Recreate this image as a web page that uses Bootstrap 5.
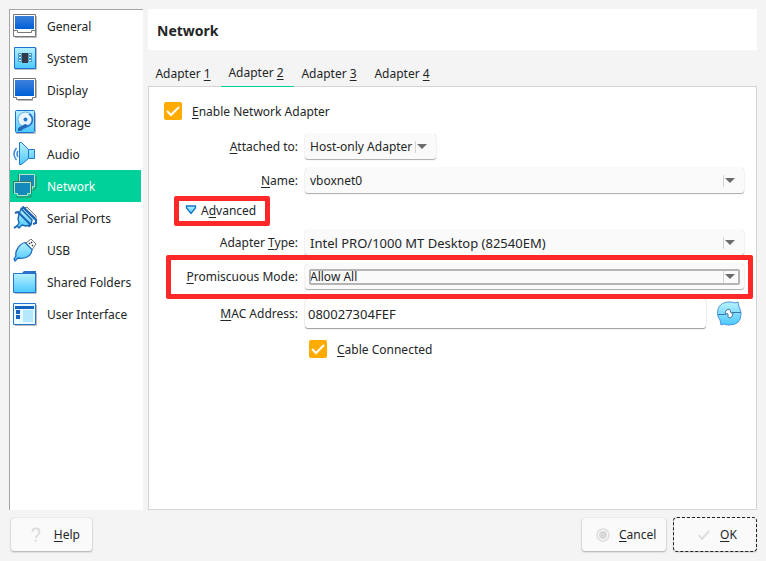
<!DOCTYPE html>
<html lang="en">
<head>
<meta charset="utf-8">
<meta name="viewport" content="width=device-width, initial-scale=1">
<title>Settings - Network</title>
<link href="https://cdn.jsdelivr.net/npm/bootstrap@5.3.0/dist/css/bootstrap.min.css" rel="stylesheet">
<style>
  body { background: #f4f4f4; color: #232627; font: 13px/18px "Noto Sans", sans-serif; padding: 9px 9px 10px; }
  u { text-underline-offset: 2px; }
  .side { width: 134px; background: #fff; border: 1px solid #a5a5a5; border-width: 1px 0 0 1px; padding-right: 2px; }
  .side .list-group-item { height: 32px; padding: 0 0 0 3px; gap: 10px; color: #232627; background: #fff; white-space: nowrap; font-size: 12px; }
  .side .list-group-item.active { background: #00d09a; color: #fff; margin-top: 0; }
  .side svg { width: 24px; height: 24px; flex: none; }
  .side span { padding-top: 2px; }
  .main-col { margin-left: 5px; }
  .title-bar { height: 41px; font-size: 14px; line-height: 41px; padding: 1px 9px 0; }
  .tabs { height: 37px; padding-top: 10px; margin-bottom: -1px; z-index: 1; }
  .tabs .nav-link { width: 73px; padding: 6px 3px 0 0; color: #232627; text-align: center; border-radius: 0; font-size: 12px; line-height: 16px; white-space: nowrap; transition: none; }
  .tabs .nav-link.active { padding-top: 5px; border-bottom: 1px solid #00d09a; }
  .panel { background: #fff; border: 1px solid #d4d4d4; padding: 15px 12px 15px 15px; font-size: 12px; }
  .field { display: grid; grid-template-columns: 134px minmax(0, 1fr); column-gap: 7px; align-items: center; }
  .field > label { text-align: right; }
  .field-gap { margin-top: 9px; }
  .field-first { margin-top: 14px; }
  .tick { appearance: none; width: 18px; height: 18px; margin: 0; flex: none; border-radius: 2px; background: #ffab00 url("data:image/svg+xml,%3Csvg xmlns='http://www.w3.org/2000/svg' viewBox='0 0 18 18'%3E%3Cpath d='M3 9l4 4 8-8' fill='none' stroke='white' stroke-width='2'/%3E%3C/svg%3E"); }
  .tick-row { height: 18px; }
  .tick-row label { padding: 2px 0 0 10px; }
  .combo { position: relative; height: 25px; border-radius: 3px; background: #fafafa; box-shadow: 0 1px 1px #aaa, 0 0 1px #ccc; }
  .combo select { appearance: none; width: 100%; height: 25px; border: 0; padding: 0 22px 0 5px; background: transparent; color: inherit; font: inherit; outline: 0; }
  .combo::before { content: ""; position: absolute; right: 20px; top: 7px; height: 12px; border-left: 1px solid #d5d5d5; }
  .combo::after { content: ""; position: absolute; right: 9px; top: 10px; border: 5px solid transparent; border-top-color: #6b6b6b; border-bottom: 0; pointer-events: none; }
  .combo-short { width: 131px; }
  .combo-short select { padding-right: 10px; }
  .combo .long-value { font-size: 13px; }
  .combo-focus select { height: 16px; margin: 5px 5px 4px 4px; width: calc(100% - 8px); padding: 0; border: 2px solid #b5b5b5; border-radius: 2px; line-height: 12px; display: block; position: absolute; text-indent: -1px; }
  .marked { position: relative; }
  .marked::after { content: ""; position: absolute; inset: -9px -9px -10px 2px; border: 5px solid #ff2828; border-radius: 2px; pointer-events: none; }
  .advanced { height: 30px; width: 96px; margin: 3px 0 4px 10px; border: 5px solid #ff2828; border-radius: 2px; background: #fff; color: inherit; padding: 0 0 0 6px; gap: 4px; }
  .advanced svg { margin-bottom: 2px; }
  .mac-row { margin-top: 10px; }
  .mac-row input { height: 29px; min-width: 0; border: 0; border-radius: 3px; padding: 0 3px; box-shadow: 0 1px 1px #999, 0 0 1px #bbb; color: inherit; outline: 0; font-size: 13px; }
  .mac-row button { width: 26px; height: 26px; margin: 0 2px 2px 10px; }
  .cable { margin: 12px 0 0 145px; }
  .foot { margin-top: 8px; padding: 0 1px 0 2px; }
  .foot .btn { height: 33px; padding: 0 12px 0 17px; border: 0; border-radius: 3px; background: #fafafa; color: #232627; font: 12px/16px "Noto Sans", sans-serif; box-shadow: 0 1px 2px #aaa, 0 0 1px #bbb; gap: 10px; }
  .foot .btn-cancel { width: 84px; padding: 0 8px 0 14px; gap: 9px; }
  .foot .btn-help { width: 81px; }
  .foot .btn-ok { width: 82px; padding: 0 18px 0 23px; outline: 1px dashed #222; gap: 9px; }
</style>
<script src="https://cdn.jsdelivr.net/npm/bootstrap@5.3.0/dist/js/bootstrap.bundle.min.js"></script>
</head>
<body class="d-flex flex-column vh-100 overflow-hidden">
<svg width="0" height="0" class="position-absolute" aria-hidden="true">
  <defs>
    <linearGradient id="screen" x2="0" y2="1"><stop stop-color="#3c80d8"/><stop offset="1" stop-color="#0060d8"/></linearGradient>
    <linearGradient id="sky" x2="0" y2="1"><stop stop-color="#b8f1ff"/><stop offset="1" stop-color="#4bc8ff"/></linearGradient>
  </defs>
</svg>
<div class="d-flex flex-grow-1">
  <nav class="side flex-shrink-0" aria-label="Settings categories">
    <div class="list-group list-group-flush">
      <a href="#" class="list-group-item list-group-item-action d-flex align-items-center border-0">
        <svg viewBox="0 0 24 24"><path d="M2 23.500H23.500V2" fill="none" stroke="#bbb"/><path d="M.5.500H22.500V22.500H.5z" fill="#fff" stroke="#777"/><path d="M2 2H21V15H2z" fill="url(#screen)"/><path d="M1 16.500H4.500V18.500H18.500V16.500H22" fill="none" stroke="#777"/></svg><span>General</span></a>
      <a href="#" class="list-group-item list-group-item-action d-flex align-items-center border-0">
        <svg viewBox="0 0 24 24"><path d="M2 23.500H23.500V2" fill="none" stroke="#bbb"/><path d="M1.500 1.500h21v21h-21z" fill="url(#sky)" stroke="#2070d0"/><path d="M5.500 7.500h3v2h-3zm0 3h3v2h-3zm0 3h3v2h-3zm10-6h3v2h-3zm0 3h3v2h-3zm0 3h3v2h-3z" fill="#fff" stroke="#3d8fc8"/><path d="M9 7h6v10H9z" fill="#333b48"/></svg><span>System</span></a>
      <a href="#" class="list-group-item list-group-item-action d-flex align-items-center border-0">
        <svg viewBox="0 0 24 24"><path d="M23.500 2V20M5 22.500H20" fill="none" stroke="#bbb"/><path d="M.5.500H22.500V19.500H19.500V21.500H3.500V19.500H.5z" fill="#fff" stroke="#777"/><path d="M2 2H21V18H2z" fill="url(#screen)"/></svg><span>Display</span></a>
      <a href="#" class="list-group-item list-group-item-action d-flex align-items-center border-0">
        <svg viewBox="0 0 24 24"><path d="M3 23.500H22.500V3" fill="none" stroke="#bbb"/><rect x="2.500" y=".5" width="19" height="22" rx="1" fill="url(#sky)" stroke="#2070d0"/><circle cx="12.500" cy="9.500" r="7.500" fill="#e6f7ff" stroke="#65a9e3"/><path d="M16 4c5 3 4 10-1 12l-4 2" fill="none" stroke="#2070d0" stroke-width="1.500"/><circle cx="12.500" cy="9.500" r="2" fill="#2875cc"/><path d="M12 14l-7 4v3h3l7-6z" fill="#2468b8"/></svg><span>Storage</span></a>
      <a href="#" class="list-group-item list-group-item-action d-flex align-items-center border-0">
        <svg viewBox="0 0 24 24"><path d="M3.500 6Q-1.500 12 3.500 18M5 9Q3 12 5 15" fill="none" stroke="#3b88df" stroke-width="1.500"/><path d="M6.500.5h2l7 7h6v9h-6l-7 6h-2z" fill="url(#sky)" stroke="#2377d2"/><path d="M15.500 7.500v9" stroke="#2377d2"/></svg><span>Audio</span></a>
      <a href="#" class="list-group-item list-group-item-action d-flex align-items-center border-0 active" aria-current="page">
        <svg viewBox="0 0 24 24"><path d="M20 16h2V14h1V2M3 23h15v-2h1" fill="none" stroke="#36836e"/><path d="M6.500.500h15v12h-2v2h-11v-2h-2z" fill="#148aba" stroke="#b9e6c8"/><path d="M1.500 8.500h16v11h-3v2h-10v-2h-3z" fill="#148aba" stroke="#b9e6c8"/><path d="M.5 7.500h18v12M.5 7.500v12M5.500.500v7" fill="none" stroke="#397665"/></svg><span>Network</span></a>
      <a href="#" class="list-group-item list-group-item-action d-flex align-items-center border-0">
        <svg viewBox="0 0 24 24"><path d="M11 2l3-1 9 9v4z" fill="#eee" stroke="#777"/><path d="M9 1l12 11.500" stroke="#1b64b5" stroke-width="3.500"/><path d="M8 3l11 11-1 5-5 1-4-1-3 3-2-2 2-3-1-4 1-5z" fill="url(#sky)" stroke="#1b64b5" stroke-width="1.300"/><path d="M2 7l3-1 12 12-1 3M21 12l2 2v3l-3 1M1 22l3-2" fill="none" stroke="#1b64b5" stroke-width="2"/><path d="M10 3l10 10" stroke="#9be5ff"/></svg><span>Serial Ports</span></a>
      <a href="#" class="list-group-item list-group-item-action d-flex align-items-center border-0">
        <svg viewBox="0 0 24 24"><path d="M13 5l5-4 5 5-4 6z" fill="#fff" stroke="#777"/><path d="M16 5h1v1h-1zm3 2h1v1h-1zm-1-3h1v1h-1z" fill="#333" stroke="#333" stroke-width=".5"/><path d="M12 4.500l7 7q0 5-5 7.500-4 2-9 1l-3 3-1-2 2-3q-1-4 2-8 2-4 7-5.500z" fill="url(#sky)" stroke="#226ec0" stroke-width="1.300"/></svg><span>USB</span></a>
      <a href="#" class="list-group-item list-group-item-action d-flex align-items-center border-0">
        <svg viewBox="0 0 24 24"><path d="M2 23.500H23.500V3" fill="none" stroke="#bbb"/><path d="M.5 3.500h22v19H.5z" fill="url(#sky)" stroke="#2474d2"/><path d="M9 3l2-2h12v3H9z" fill="#2a70ca"/></svg><span>Shared Folders</span></a>
      <a href="#" class="list-group-item list-group-item-action d-flex align-items-center border-0">
        <svg viewBox="0 0 24 24"><path d="M2 23.500H23.500V3" fill="none" stroke="#bbb"/><path d="M.5 1.500h22v21H.5z" fill="#e9fbff" stroke="#2474d2"/><path d="M2 4h19v3H2zm1 4h4v4H3zm0 5h4v4H3z" fill="#1763bd"/><path d="M10 8h10v12H10z" fill="#b5e8fc"/></svg><span>User Interface</span></a>
    </div>
  </nav>
  <main class="main-col flex-grow-1 d-flex flex-column">
    <h1 class="title-bar bg-white fw-bold m-0">Network</h1>
    <div class="nav tabs position-relative flex-nowrap" role="tablist">
      <a class="nav-link" role="tab" href="#">Adapter <u>1</u></a>
      <a class="nav-link active" role="tab" aria-selected="true" href="#">Adapter <u>2</u></a>
      <a class="nav-link" role="tab" href="#">Adapter <u>3</u></a>
      <a class="nav-link" role="tab" href="#">Adapter <u>4</u></a>
    </div>
    <form class="panel flex-grow-1">
      <div class="tick-row d-flex align-items-center">
        <input class="tick" type="checkbox" id="enable" checked><label for="enable"><u>E</u>nable Network Adapter</label>
      </div>
      <div class="field field-first">
        <label for="attached"><u>A</u>ttached to:</label>
        <div class="combo combo-short"><select id="attached"><option>Host-only Adapter</option></select></div>
      </div>
      <div class="field field-gap">
        <label for="name"><u>N</u>ame:</label>
        <div class="combo"><select id="name"><option>vboxnet0</option></select></div>
      </div>
      <button type="button" class="advanced d-flex align-items-center" aria-expanded="true">
        <svg width="12" height="10" viewBox="0 0 12 10"><path d="M1.500 1h9v2L6 8.500 1.500 3z" fill="url(#sky)" stroke="#1674c8" stroke-width="1.300"/></svg>
        <span>A<u>d</u>vanced</span>
      </button>
      <div class="field">
        <label for="type">Adapter <u>T</u>ype:</label>
        <div class="combo"><select id="type" class="long-value"><option>Intel PRO/1000 MT Desktop (82540EM)</option></select></div>
      </div>
      <div class="field field-gap marked">
        <label for="mode"><u>P</u>romiscuous Mode:</label>
        <div class="combo combo-focus"><select id="mode"><option>Allow All</option></select></div>
      </div>
      <div class="field mac-row">
        <label for="mac"><u>M</u>AC Address:</label>
        <div class="d-flex align-items-center">
          <input class="flex-grow-1" type="text" id="mac" value="080027304FEF">
          <button type="button" class="btn p-0 border-0 d-flex" aria-label="Generate a new MAC address">
            <svg width="26" height="26" viewBox="0 0 26 26"><path d="M1.500 13.500C1.500 6 6 2 13 2q4 0 6 1l3-1 1 5q2 3 2 7 0 11-12 11-3 0-5-1l-3 1-1-5q-2.500-3-2.500-6.500z" fill="url(#sky)" stroke="#4b96dc"/><path d="M2 14.500h8M16 12.500h9" stroke="#3b78b0"/><path d="M9 13q0-3 4-4l1 1 1 3h2q0 4-3 5l-2-1v-3z" fill="#fff" stroke="#4a779b"/></svg>
          </button>
        </div>
      </div>
      <div class="cable tick-row d-flex align-items-center">
        <input class="tick" type="checkbox" id="cable" checked><label for="cable"><u>C</u>able Connected</label>
      </div>
    </form>
  </main>
</div>
<footer class="foot d-flex">
  <button type="button" class="btn btn-help d-flex align-items-center me-auto"><svg width="16" height="16" viewBox="0 0 16 16"><path d="M4.500 5Q4.500 1.500 8 1.500T11.500 5Q11.500 7 9.500 8.500Q8 9.500 8 11M8 12.500v2" fill="none" stroke="#ddd" stroke-width="2"/></svg><span><u>H</u>elp</span></button>
  <button type="button" class="btn btn-cancel d-flex align-items-center"><svg width="14" height="14" viewBox="0 0 14 14"><circle cx="7" cy="7" r="6" fill="none" stroke="#ddd" stroke-width="1.500"/><circle cx="7" cy="7" r="4" fill="#d8d8d8"/></svg><span><u>C</u>ancel</span></button>
  <button type="button" class="btn btn-ok d-flex align-items-center ms-2"><svg width="14" height="14" viewBox="0 0 14 14"><path d="M2 7l3 4 7-8" fill="none" stroke="#ddd" stroke-width="2"/></svg><span><u>O</u>K</span></button>
</footer>
</body>
</html>
